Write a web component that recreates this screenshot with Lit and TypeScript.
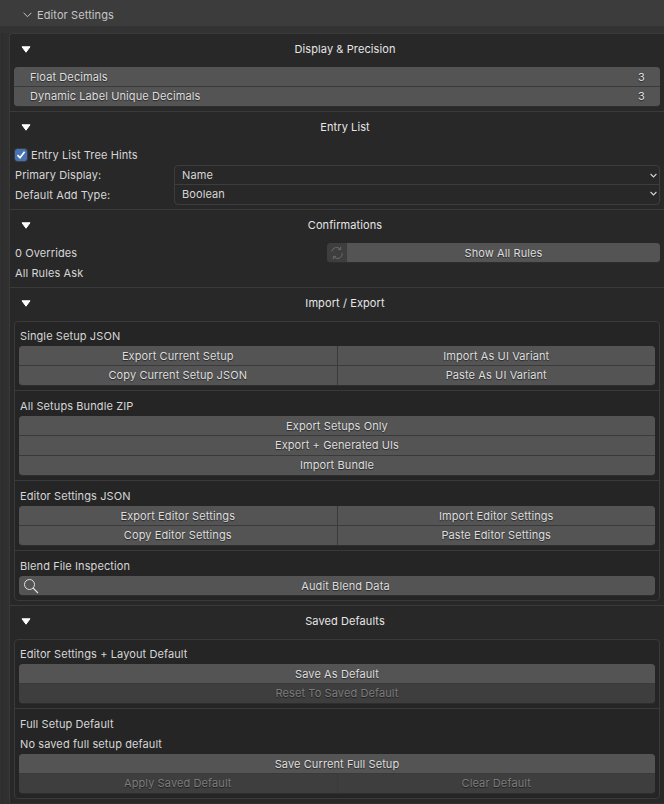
import { LitElement, html, css, svg } from "lit";
import { customElement } from "lit/decorators.js";

type Btn = { t: string; off?: boolean };

const tri = html`<svg class="tri" width="10" height="7" viewBox="0 0 10 7"><path d="M1 .8h8L5 6.2z" fill="#fff" stroke="#fff" stroke-width="1" stroke-linejoin="round"/></svg>`;
const topChev = html`<svg width="9" height="6" viewBox="0 0 9 6"><path d="M.6 .8l3.9 3.9L8.4 .8" fill="none" stroke="#c4c4c4" stroke-width="1"/></svg>`;
const chev = html`<svg width="7" height="5" viewBox="0 0 7 5"><path d="M.6 1l2.9 2.9L6.4 1" fill="none" stroke="#d4d4d4" stroke-width="1.1"/></svg>`;
const refresh = svg`<path d="M3.5 8A6 6 0 0 1 14 5.2M16.5 10A6 6 0 0 1 6 14.8M14.6 2.2v3.6H11M5.4 17.8v-3.6H9" fill="none" stroke="#6e6e6e" stroke-width="1.1"/>`;

@customElement("app-root")
export class AppRoot extends LitElement {
  static styles = css`
    :host { display: block; width: 664px; height: 804px; overflow: hidden; background: #303030; color: #d6d6d6;
      font: 11px/20px Inter, "Liberation Sans", sans-serif; letter-spacing: .1px; }
    .top { height: 26px; background: #3c3c3c; display: flex; align-items: center; gap: 5px; padding: 4px 0 0 23px; box-sizing: border-box; color: #c6c6c6; }
    .top svg { display: block; }
    .band { height: 7px; background: #333; }
    .shell { display: flex; }
    .rail { flex: none; background: #303030; box-sizing: border-box; border-left: 1px solid #2b2b2b; margin-left: 2px; width: 7px; }
    .panel { flex: 1; background: #282828; border-top: 1px solid #3a3a3a; border-left: 1px solid #3a3a3a; border-radius: 4px 0 0 0; }
    .section { padding: 0 4px 4px; border-top: 1px solid #3a3a3a; }
    .section:first-child { border-top: 0; }
    .head { height: 33px; position: relative; display: flex; align-items: center; justify-content: center; color: #e6e6e6; padding: 0 0 4px 16px; box-sizing: border-box; }
    .tri { position: absolute; left: 7px; top: 12px; }
    .row { height: 20px; display: flex; align-items: center; padding-left: 1px; }
    .stack { border-radius: 4px; overflow: hidden; background: #3a3a3a; display: flex; flex-direction: column; gap: 1px; border-bottom: 1px solid #2e2e2e; }
    .line { height: 19px; display: grid; grid-auto-flow: column; grid-auto-columns: 1fr; gap: 1px; }
    .btn { background: #545454; display: flex; align-items: center; justify-content: center; color: #dedede; text-shadow: 0 1px 1px rgba(0,0,0,.55); white-space: nowrap; position: relative; line-height: 16px; min-height: 0; box-sizing: border-box; }
    .line:nth-child(n+2) .btn { padding-bottom: 2px; }
    .btn.off { background: #3e3e3e; color: #7c7c7c; }
    .btn.num { justify-content: space-between; padding-left: 16px; padding-right: 15px; }
    .btn.aud { padding-left: 17px; }
    .check { gap: 4px; }
    .box { width: 12px; height: 12px; background: #4772b3; border-radius: 2px; display: flex; align-items: center; justify-content: center; outline: 1px solid #3d3d3d; }
    .form { display: grid; grid-template-columns: 160px 1fr; }
    .drops { border: 1px solid #3d3d3d; border-radius: 4px; height: 40px; box-sizing: border-box; }
    .drop { display: flex; align-items: center; justify-content: space-between; padding: 0 2px 0 7px; box-sizing: border-box; line-height: 16px; height: 18px; }
    .drop + .drop { border-top: 1px solid #3d3d3d; height: 20px; padding-bottom: 2px; }
    .drop svg { display: block; }
    .labels { display: flex; flex-direction: column; }
    .rules { display: grid; grid-template-columns: 1fr 333px; height: 20px; }
    .rulesbtn { display: grid; grid-template-columns: 19px 1fr; gap: 1px; height: 19px; border-radius: 4px; overflow: hidden; background: #3d3d3d; border-bottom: 1px solid #2e2e2e; }
    .rulesbtn .ico { background: #3e3e3e; display: flex; align-items: center; justify-content: center; }
    .group { border: 1px solid #3a3a3a; border-radius: 4px; background: #252525; }
    .sub { padding: 5px 4px 4px; border-top: 1px solid #3a3a3a; }
    .sub:first-child { border-top: 0; padding-top: 4px; }
    .search { position: absolute; left: 4px; top: 2px; }
  `;

  private stack(rows: Btn[][]) {
    return html`<div class="stack">
      ${rows.map(r => html`<div class="line">${r.map(b => html`<div class="btn ${b.off ? "off" : ""}">${b.t}</div>`)}</div>`)}
    </div>`;
  }

  render() {
    return html`
      <div class="top">${topChev}<span>Editor Settings</span></div>
      <div class="band"></div>
      <div class="shell">
        <div class="rail"></div>
        <div class="panel">
          <section class="section">
            <div class="head">${tri}Display &amp; Precision</div>
            <div class="stack">
              <div class="line"><div class="btn num"><span>Float Decimals</span><span>3</span></div></div>
              <div class="line"><div class="btn num"><span>Dynamic Label Unique Decimals</span><span>3</span></div></div>
            </div>
          </section>
          <section class="section">
            <div class="head">${tri}Entry List</div>
            <div class="row check">
              <div class="box"><svg width="10" height="10" viewBox="0 0 10 10"><path d="M1.5 5.2L4 7.8 8.6 1.8" fill="none" stroke="#fff" stroke-width="1.7"/></svg></div>
              <span>Entry List Tree Hints</span>
            </div>
            <div class="form">
              <div class="labels"><div class="row">Primary Display:</div><div class="row">Default Add Type:</div></div>
              <div class="drops">
                <div class="drop"><span>Name</span>${chev}</div>
                <div class="drop"><span>Boolean</span>${chev}</div>
              </div>
            </div>
          </section>
          <section class="section">
            <div class="head">${tri}Confirmations</div>
            <div class="rules">
              <div class="row">0 Overrides</div>
              <div class="rulesbtn">
                <div class="ico"><svg width="16" height="16" viewBox="0 0 20 20">${refresh}</svg></div>
                <div class="btn">Show All Rules</div>
              </div>
            </div>
            <div class="row">All Rules Ask</div>
          </section>
          <section class="section">
            <div class="head">${tri}Import / Export</div>
            <div class="group">
              <div class="sub">
                <div class="row">Single Setup JSON</div>
                ${this.stack([[{ t: "Export Current Setup" }, { t: "Import As UI Variant" }], [{ t: "Copy Current Setup JSON" }, { t: "Paste As UI Variant" }]])}
              </div>
              <div class="sub">
                <div class="row">All Setups Bundle ZIP</div>
                ${this.stack([[{ t: "Export Setups Only" }], [{ t: "Export + Generated UIs" }], [{ t: "Import Bundle" }]])}
              </div>
              <div class="sub">
                <div class="row">Editor Settings JSON</div>
                ${this.stack([[{ t: "Export Editor Settings" }, { t: "Import Editor Settings" }], [{ t: "Copy Editor Settings" }, { t: "Paste Editor Settings" }]])}
              </div>
              <div class="sub">
                <div class="row">Blend File Inspection</div>
                <div class="stack"><div class="line"><div class="btn aud">
                  <svg class="search" width="16" height="16" viewBox="0 0 16 16"><circle cx="6.5" cy="6.5" r="5" fill="none" stroke="#e0e0e0" stroke-width="1"/><path d="M10 10l5 5" stroke="#e0e0e0" stroke-width="1.1"/></svg>
                  Audit Blend Data
                </div></div></div>
              </div>
            </div>
          </section>
          <section class="section">
            <div class="head">${tri}Saved Defaults</div>
            <div class="group">
              <div class="sub">
                <div class="row">Editor Settings + Layout Default</div>
                ${this.stack([[{ t: "Save As Default" }], [{ t: "Reset To Saved Default", off: true }]])}
              </div>
              <div class="sub">
                <div class="row">Full Setup Default</div>
                <div class="row">No saved full setup default</div>
                ${this.stack([[{ t: "Save Current Full Setup" }], [{ t: "Apply Saved Default", off: true }, { t: "Clear Default", off: true }]])}
              </div>
            </div>
          </section>
        </div>
      </div>
    `;
  }
}
